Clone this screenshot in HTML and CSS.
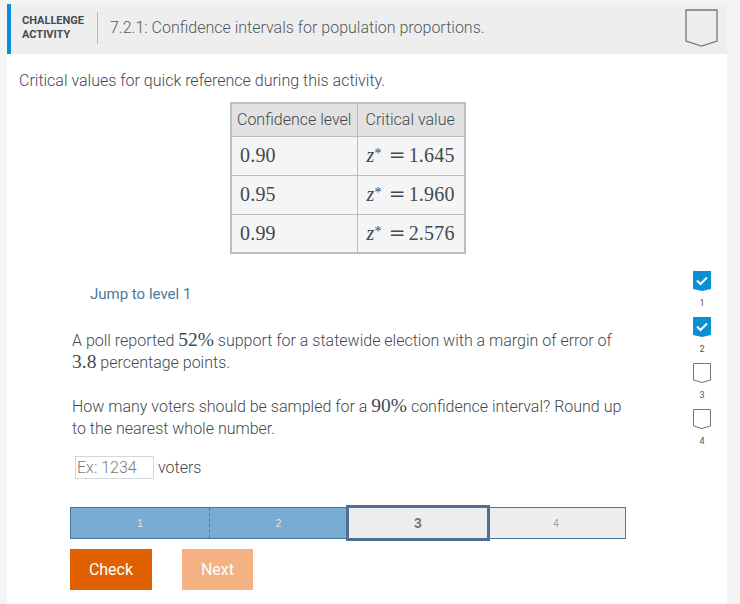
FILE: index.html
```html
<!DOCTYPE html>
<html>
<head>
    <meta charset="UTF-8">
    <title>Challenge Activity</title>
    <link rel="stylesheet" href="styles.css">
</head>
<body>
    <div class="card">
        <header class="activity-header">
            <div class="activity-label">CHALLENGE<br>ACTIVITY</div>
            <div class="activity-title">7.2.1: Confidence intervals for population proportions.</div>
            <svg class="chevron-large" width="33" height="38" viewBox="0 0 33 38">
                <path d="M1 1H32V32L16.5 37 1 32Z" fill="none" stroke="#757575" stroke-width="1.3"/>
            </svg>
        </header>

        <p class="intro">Critical values for quick reference during this activity.</p>

        <div class="table-wrap">
            <table class="values">
                <thead>
                    <tr>
                        <th class="col-level">Confidence level</th>
                        <th class="col-value">Critical value</th>
                    </tr>
                </thead>
                <tbody>
                    <tr>
                        <td class="math">0.90</td>
                        <td class="math col-value"><i>z</i><sup>*</sup><span class="eq">=</span>1.645</td>
                    </tr>
                    <tr>
                        <td class="math">0.95</td>
                        <td class="math col-value"><i>z</i><sup>*</sup><span class="eq">=</span>1.960</td>
                    </tr>
                    <tr>
                        <td class="math">0.99</td>
                        <td class="math col-value"><i>z</i><sup>*</sup><span class="eq">=</span>2.576</td>
                    </tr>
                </tbody>
            </table>
        </div>

        <div class="activity-body">
            <div class="question">
                <div class="jump">Jump to level 1</div>
                <p class="prompt">A poll reported <span class="math">52%</span> support for a statewide election with a margin of error of <span class="math">3.8</span> percentage points.</p>
                <p class="prompt">How many voters should be sampled for a <span class="math">90%</span> confidence interval? Round up to the nearest whole number.</p>
                <div class="answer">
                    <input class="answer-input" type="text" placeholder="Ex: 1234">
                    <span>voters</span>
                </div>
                <div class="levels">
                    <div class="level done">1</div>
                    <div class="level done">2</div>
                    <div class="level current">3</div>
                    <div class="level upcoming">4</div>
                </div>
                <div class="buttons">
                    <button class="btn check">Check</button>
                    <button class="btn next">Next</button>
                </div>
            </div>

            <div class="level-list">
                <div class="level-item">
                    <svg width="18" height="20" viewBox="0 0 18 20">
                        <path d="M0 0H18V18L9 20 0 18Z" fill="#0a8fd6"/>
                        <path d="M4 9.5L7.5 13 14 6.5" fill="none" stroke="#fff" stroke-width="2"/>
                    </svg>
                    <span>1</span>
                </div>
                <div class="level-item">
                    <svg width="18" height="20" viewBox="0 0 18 20">
                        <path d="M0 0H18V18L9 20 0 18Z" fill="#0a8fd6"/>
                        <path d="M4 9.5L7.5 13 14 6.5" fill="none" stroke="#fff" stroke-width="2"/>
                    </svg>
                    <span>2</span>
                </div>
                <div class="level-item">
                    <svg width="18" height="20" viewBox="0 0 18 20">
                        <path d="M.5.5H17.5V17L9 19.5 .5 17Z" fill="none" stroke="#757575"/>
                    </svg>
                    <span>3</span>
                </div>
                <div class="level-item">
                    <svg width="18" height="20" viewBox="0 0 18 20">
                        <path d="M.5.5H17.5V17L9 19.5 .5 17Z" fill="none" stroke="#757575"/>
                    </svg>
                    <span>4</span>
                </div>
            </div>
        </div>
    </div>
</body>
</html>
```

FILE: styles.css
```css
body {
    font-family: Roboto, Arial, sans-serif;
    font-weight: 300;
    font-size: 16px;
    color: #3f4a50;
    margin: 0;
    height: 604px;
    overflow: hidden;
    background-color: #f4f4f4;
}
.card {
    margin: 4px 13px 0 7px;
    height: 600px;
    background-color: #fff;
}
.activity-header {
    display: flex;
    align-items: center;
    height: 50px;
    padding-bottom: 3px;
    background-color: #eeeeee;
    border-left: 4px solid #0a8fd6;
    box-sizing: border-box;
}
.activity-label {
    font-size: 11px;
    font-weight: 700;
    line-height: 14px;
    color: #424c52;
    margin-left: 11px;
    padding-right: 13px;
}
.activity-title {
    flex: 1;
    font-size: 16px;
    color: #515a5f;
    line-height: 32px;
    padding-left: 12px;
    border-left: 1px solid #b8b8b8;
}
.chevron-large {
    margin-right: 9px;
    margin-top: 1px;
}
.intro {
    margin: 0;
    padding: 17px 0 0 12px;
    line-height: 20px;
}
.table-wrap {
    width: 658px;
    margin: 11px 0 0 12px;
    display: flex;
    justify-content: center;
}
.values {
    width: 236px;
    table-layout: fixed;
    border-collapse: collapse;
    border: 2px solid #bdbdbd;
    background-color: #f5f5f5;
}
.values th, .values td {
    border: 1px solid #bdbdbd;
    text-align: left;
}
.values th {
    font-weight: 300;
    background-color: #e2e2e2;
    height: 33px;
    padding: 0 5px;
    box-sizing: border-box;
}
.col-level {
    width: 126px;
}
.values td {
    height: 39px;
    padding: 0 8px 1px;
    box-sizing: border-box;
}
.values th.col-value {
    padding-left: 8px;
}
.values td.col-value {
    padding-left: 9px;
    padding-right: 0;
}
.math {
    font-family: "Liberation Serif", serif;
    font-weight: 400;
    font-size: 19.5px;
    line-height: 0;
}
.values .math {
    font-size: 20px;
    letter-spacing: 0.2px;
    line-height: 20px;
    white-space: nowrap;
}
.math sup {
    font-size: 14px;
    line-height: 0;
    vertical-align: 4px;
}
.eq {
    font-family: "DejaVu Serif", serif;
    font-size: 20px;
    line-height: 0;
    padding: 0 3px 0 7px;
}
.activity-body {
    display: flex;
}
.question {
    width: 556px;
    margin-left: 63px;
}
.jump {
    font-size: 15px;
    font-weight: 400;
    color: #4a7a9c;
    line-height: 20px;
    margin: 30px 0 0 20px;
}
.prompt {
    margin: 26px 0 0 2px;
    line-height: 22px;
}
.prompt + .prompt {
    margin-top: 22px;
}
.answer {
    display: flex;
    align-items: center;
    gap: 4px;
    margin: 16px 0 0 5px;
}
.answer-input {
    width: 79px;
    height: 23px;
    box-sizing: border-box;
    border: 1px solid #cfd8dc;
    padding: 0 1px;
    font-family: Roboto, Arial, sans-serif;
    font-weight: 300;
    font-size: 16px;
}
.answer-input::placeholder {
    color: #7a7a7a;
}
.levels {
    display: flex;
    height: 32px;
    margin-top: 28px;
    box-sizing: border-box;
    border: 1px solid #43789f;
    background-color: #eeeeee;
}
.level {
    display: flex;
    align-items: center;
    justify-content: center;
    font-family: "Liberation Sans", Arial, sans-serif;
    font-weight: 400;
    font-size: 10px;
    color: #9a9a9a;
}
.level.done {
    width: 138px;
    box-sizing: border-box;
    background-color: #78acd3;
    color: #dbe8f2;
}
.level.done + .level.done {
    border-left: 1px dashed #43789f;
}
.level.current {
    width: 144px;
    box-sizing: border-box;
    font-size: 14px;
    font-weight: 700;
    color: #777;
    margin: -3px -3px -3px -1px;
    border: 3px solid #4f6f94;
    z-index: 1;
}
.level.upcoming {
    flex: 1;
}
.buttons {
    display: flex;
    gap: 30px;
    margin-top: 10px;
}
.btn {
    height: 41px;
    border: none;
    color: #fff;
    font-family: Roboto, Arial, sans-serif;
    font-weight: 400;
    font-size: 16px;
    cursor: pointer;
}
.check {
    width: 82px;
    background-color: #e06000;
}
.next {
    width: 71px;
    background-color: #f4b181;
}
.level-list {
    display: flex;
    flex-direction: column;
    gap: 6px;
    margin: 17px 0 0 67px;
}
.level-item {
    display: flex;
    flex-direction: column;
    align-items: center;
    width: 18px;
    height: 40px;
    font-size: 9px;
    font-weight: 400;
    color: #555;
}
.level-item span {
    margin-top: 7px;
}
```
